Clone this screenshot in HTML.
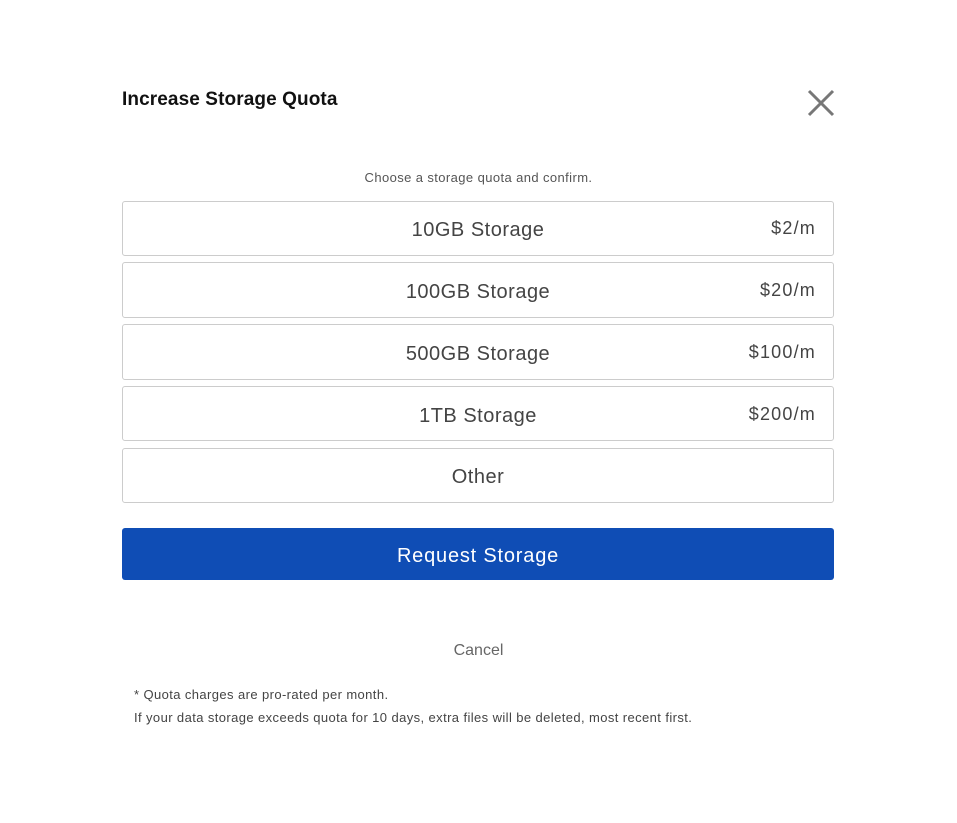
<!DOCTYPE html>
<html><head><style>
body{margin:0;background:#fff;font-family:"Liberation Sans",sans-serif;width:957px;height:823px;position:relative;overflow:hidden}
.a{position:absolute}
.title{left:122px;top:89px;font-size:19px;font-weight:bold;color:#111;letter-spacing:0.1px}
.sub{left:0;width:957px;text-align:center;top:170px;font-size:13px;color:#555;letter-spacing:0.4px}
.box{left:122px;width:710px;border:1px solid #ccc;border-radius:3px;color:#444;font-size:20px;letter-spacing:0.5px}
.box .l{position:absolute;left:0;right:0;text-align:center}
.box .p{position:absolute;right:17px;font-size:18px;letter-spacing:1.2px}
.btn{left:122px;top:528px;width:712px;height:52px;background:#0f4db5;border-radius:3px;color:#fff;font-size:20px;text-align:center;line-height:56px;letter-spacing:0.8px}
.cancel{left:0;width:957px;text-align:center;top:642px;font-size:16px;color:#666}
.note{left:134px;font-size:13px;color:#444;letter-spacing:0.4px}
</style></head><body>
<div class="a title">Increase Storage Quota</div>
<svg class="a" style="left:806px;top:88px" width="30" height="30"><path d="M3 3L27 27M27 3L3 27" stroke="#777" stroke-width="3"/></svg>
<div class="a sub">Choose a storage quota and confirm.</div>
<div class="a box" style="top:201px;height:53px"><span class="l" style="top:17px">10GB Storage</span><span class="p" style="top:16px">$2/m</span></div>
<div class="a box" style="top:262px;height:54px"><span class="l" style="top:18px">100GB Storage</span><span class="p" style="top:17px">$20/m</span></div>
<div class="a box" style="top:324px;height:54px"><span class="l" style="top:18px">500GB Storage</span><span class="p" style="top:17px">$100/m</span></div>
<div class="a box" style="top:386px;height:53px"><span class="l" style="top:18px">1TB Storage</span><span class="p" style="top:17px">$200/m</span></div>
<div class="a box" style="top:448px;height:53px"><span class="l" style="top:17px">Other</span></div>
<div class="a btn">Request Storage</div>
<div class="a cancel">Cancel</div>
<div class="a note" style="top:687px">* Quota charges are pro-rated per month.</div>
<div class="a note" style="top:710px">If your data storage exceeds quota for 10 days, extra files will be deleted, most recent first.</div>
</body></html>
